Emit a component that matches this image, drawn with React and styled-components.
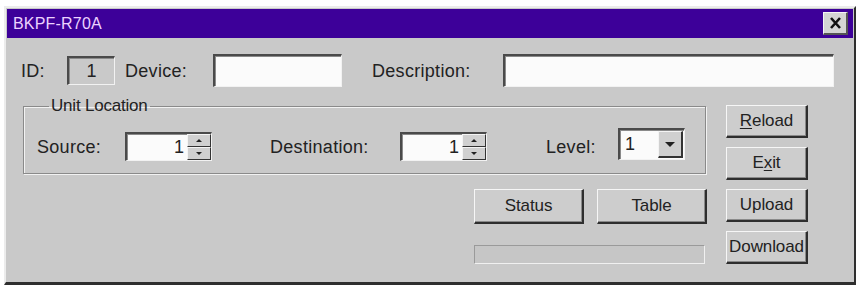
import React from "react";
import styled, { createGlobalStyle } from "styled-components";

const Global = createGlobalStyle`
  html, body {
    margin: 0;
    padding: 0;
    background: #ffffff;
  }
  body {
    font-family: "Liberation Sans", Arial, sans-serif;
    color: #222;
  }
`;

const Window = styled.div`
  box-sizing: border-box;
  margin: 6px 0 0 4px;
  width: 852px;
  height: 279px;
  background: #c9c9c9;
  border-top: 2px solid #ececec;
  border-left: 2px solid #ececec;
  border-right: 2px solid #2e2e2e;
  border-bottom: 3px solid #2e2e2e;
  padding: 1px;
  display: flex;
  flex-direction: column;
`;

const TitleBar = styled.div`
  height: 29px;
  background: #3d0099;
  display: flex;
  align-items: center;
  justify-content: space-between;
  padding: 0 5px 0 6px;
`;

const Title = styled.span`
  color: #ecd2ff;
  font-size: 16px;
  letter-spacing: 0.2px;
`;

const CloseButton = styled.div`
  box-sizing: border-box;
  width: 25px;
  height: 23px;
  background: #d4d4d4;
  border-top: 1px solid #f4f4f4;
  border-left: 1px solid #f4f4f4;
  border-right: 2px solid #555;
  border-bottom: 2px solid #555;
  display: flex;
  align-items: center;
  justify-content: center;
`;

const Body = styled.div`
  display: flex;
  flex-direction: column;
  padding: 16px 0 0 14px;
`;

const TopRow = styled.div`
  display: flex;
  align-items: center;
  height: 33px;
`;

const Label = styled.span`
  font-size: 18px;
  width: ${(p) => p.$w}px;
  flex-shrink: 0;
  white-space: nowrap;
  letter-spacing: 0.3px;
  padding-top: 2px;
`;

const sunken = `
  box-sizing: border-box;
  border-top: 2px solid #4a4a4a;
  border-left: 2px solid #4a4a4a;
  border-right: 1px solid #f2f2f2;
  border-bottom: 1px solid #f2f2f2;
  box-shadow: inset 1px 1px 0 #8a8a8a;
`;

const IdBox = styled.div`
  ${sunken}
  width: 48px;
  height: 29px;
  background: #c9c9c9;
  display: flex;
  align-items: center;
  justify-content: center;
  font-size: 18px;
  margin-right: 10px;
`;

const TextField = styled.div`
  ${sunken}
  width: ${(p) => p.$w}px;
  height: 33px;
  background: #fbfbfb;
  margin-right: ${(p) => p.$mr || 0}px;
  flex-shrink: 0;
`;

const Main = styled.div`
  display: flex;
  margin-top: 9px;
`;

const LeftCol = styled.div`
  width: 683px;
  margin-left: 2px;
  display: flex;
  flex-direction: column;
`;

const Group = styled.fieldset`
  box-sizing: border-box;
  margin: 0;
  height: 78px;
  padding: 14px 0 0 13px;
  border: 1px solid #8a8a8a;
  box-shadow: 1px 1px 0 #f2f2f2, inset 1px 1px 0 #f2f2f2;
  display: flex;
  align-items: flex-start;
`;

const Legend = styled.legend`
  font-size: 17px;
  padding: 0 2px;
  margin-left: 12px;
  letter-spacing: -0.2px;
`;

const Field = styled.div`
  display: flex;
  align-items: center;
  margin-right: ${(p) => p.$mr || 0}px;
  height: 32px;
`;

const Spinner = styled.div`
  ${sunken}
  width: 87px;
  height: 29px;
  background: #fbfbfb;
  display: flex;
`;

const SpinValue = styled.div`
  flex: 1;
  text-align: right;
  font-size: 18px;
  padding-right: 3px;
  line-height: 26px;
`;

const SpinButtons = styled.div`
  width: 24px;
  display: flex;
  flex-direction: column;
`;

const SpinBtn = styled.div`
  flex: 1;
  background: #d0d0d0;
  border-top: 1px solid #f4f4f4;
  border-left: 1px solid #f4f4f4;
  border-right: 1px solid #333;
  border-bottom: 1px solid #333;
  display: flex;
  align-items: center;
  justify-content: center;
`;

const Arrow = styled.span`
  width: 0;
  height: 0;
  border-left: ${(p) => p.$s}px solid transparent;
  border-right: ${(p) => p.$s}px solid transparent;
  ${(p) =>
    p.$up
      ? `border-bottom: ${p.$s}px solid #222;`
      : `border-top: ${p.$s}px solid #222;`}
`;

const Select = styled.div`
  ${sunken}
  width: 67px;
  height: 32px;
  background: #fbfbfb;
  display: flex;
  align-items: stretch;
  margin-top: -4px;
`;

const SelectValue = styled.div`
  flex: 1;
  font-size: 18px;
  padding-left: 5px;
  line-height: 29px;
`;

const SelectBtn = styled.div`
  width: 22px;
  margin: 1px;
  background: #d0d0d0;
  border-top: 1px solid #f4f4f4;
  border-left: 1px solid #f4f4f4;
  border-right: 2px solid #333;
  border-bottom: 2px solid #333;
  display: flex;
  align-items: center;
  justify-content: center;
`;

const ActionRow = styled.div`
  display: flex;
  justify-content: flex-end;
  gap: 13px;
  margin-top: 15px;
  margin-right: -1px;
`;

const Button = styled.button`
  box-sizing: border-box;
  width: ${(p) => p.$w || 82}px;
  height: ${(p) => p.$h || 33}px;
  background: #cdcdcd;
  font-family: "Liberation Sans", Arial, sans-serif;
  font-size: 17px;
  color: #222;
  letter-spacing: -0.1px;
  padding: 0;
  border-top: 1px solid #f6f6f6;
  border-left: 1px solid #f6f6f6;
  border-right: 2px solid #2e2e2e;
  border-bottom: 2px solid #2e2e2e;
  box-shadow: inset -1px -1px 0 #8a8a8a;
  border-radius: 0;
  cursor: default;
  white-space: nowrap;

  u {
    text-decoration: underline;
    text-underline-offset: 2px;
  }
`;

const Progress = styled.div`
  box-sizing: border-box;
  align-self: flex-end;
  width: 231px;
  height: 19px;
  margin-top: 21px;
  margin-right: 1px;
  border-top: 1px solid #9a9a9a;
  border-left: 1px solid #9a9a9a;
  border-right: 1px solid #f0f0f0;
  border-bottom: 1px solid #f0f0f0;
  background: #c6c6c6;
`;

const RightCol = styled.div`
  display: flex;
  flex-direction: column;
  gap: 9px;
  margin-left: 20px;
  padding-top: 9px;
`;

function SpinBox({ value }) {
  return (
    <Spinner>
      <SpinValue>{value}</SpinValue>
      <SpinButtons>
        <SpinBtn>
          <Arrow $up $s={3} />
        </SpinBtn>
        <SpinBtn>
          <Arrow $s={3} />
        </SpinBtn>
      </SpinButtons>
    </Spinner>
  );
}

export default function App() {
  return (
    <>
      <Global />
      <Window>
        <TitleBar>
          <Title>BKPF-R70A</Title>
          <CloseButton>
            <svg width="13" height="12" viewBox="0 0 13 12">
              <path d="M2 1 L11 11 M11 1 L2 11" stroke="#111" strokeWidth="2.6" />
            </svg>
          </CloseButton>
        </TitleBar>
        <Body>
          <TopRow>
            <Label $w={46}>ID:</Label>
            <IdBox>1</IdBox>
            <Label $w={88}>Device:</Label>
            <TextField $w={129} $mr={30} />
            <Label $w={131}>Description:</Label>
            <TextField $w={331} />
          </TopRow>
          <Main>
            <LeftCol>
              <Group>
                <Legend>Unit Location</Legend>
                <Field $mr={58}>
                  <Label $w={88}>Source:</Label>
                  <SpinBox value="1" />
                </Field>
                <Field $mr={59}>
                  <Label $w={130}>Destination:</Label>
                  <SpinBox value="1" />
                </Field>
                <Field>
                  <Label $w={72}>Level:</Label>
                  <Select>
                    <SelectValue>1</SelectValue>
                    <SelectBtn>
                      <Arrow $s={5} />
                    </SelectBtn>
                  </Select>
                </Field>
              </Group>
              <ActionRow>
                <Button $w={110} $h={35}>Status</Button>
                <Button $w={110} $h={35}>Table</Button>
              </ActionRow>
              <Progress />
            </LeftCol>
            <RightCol>
              <Button>
                <u>R</u>eload
              </Button>
              <Button>
                E<u>x</u>it
              </Button>
              <Button>Upload</Button>
              <Button>Download</Button>
            </RightCol>
          </Main>
        </Body>
      </Window>
    </>
  );
}
